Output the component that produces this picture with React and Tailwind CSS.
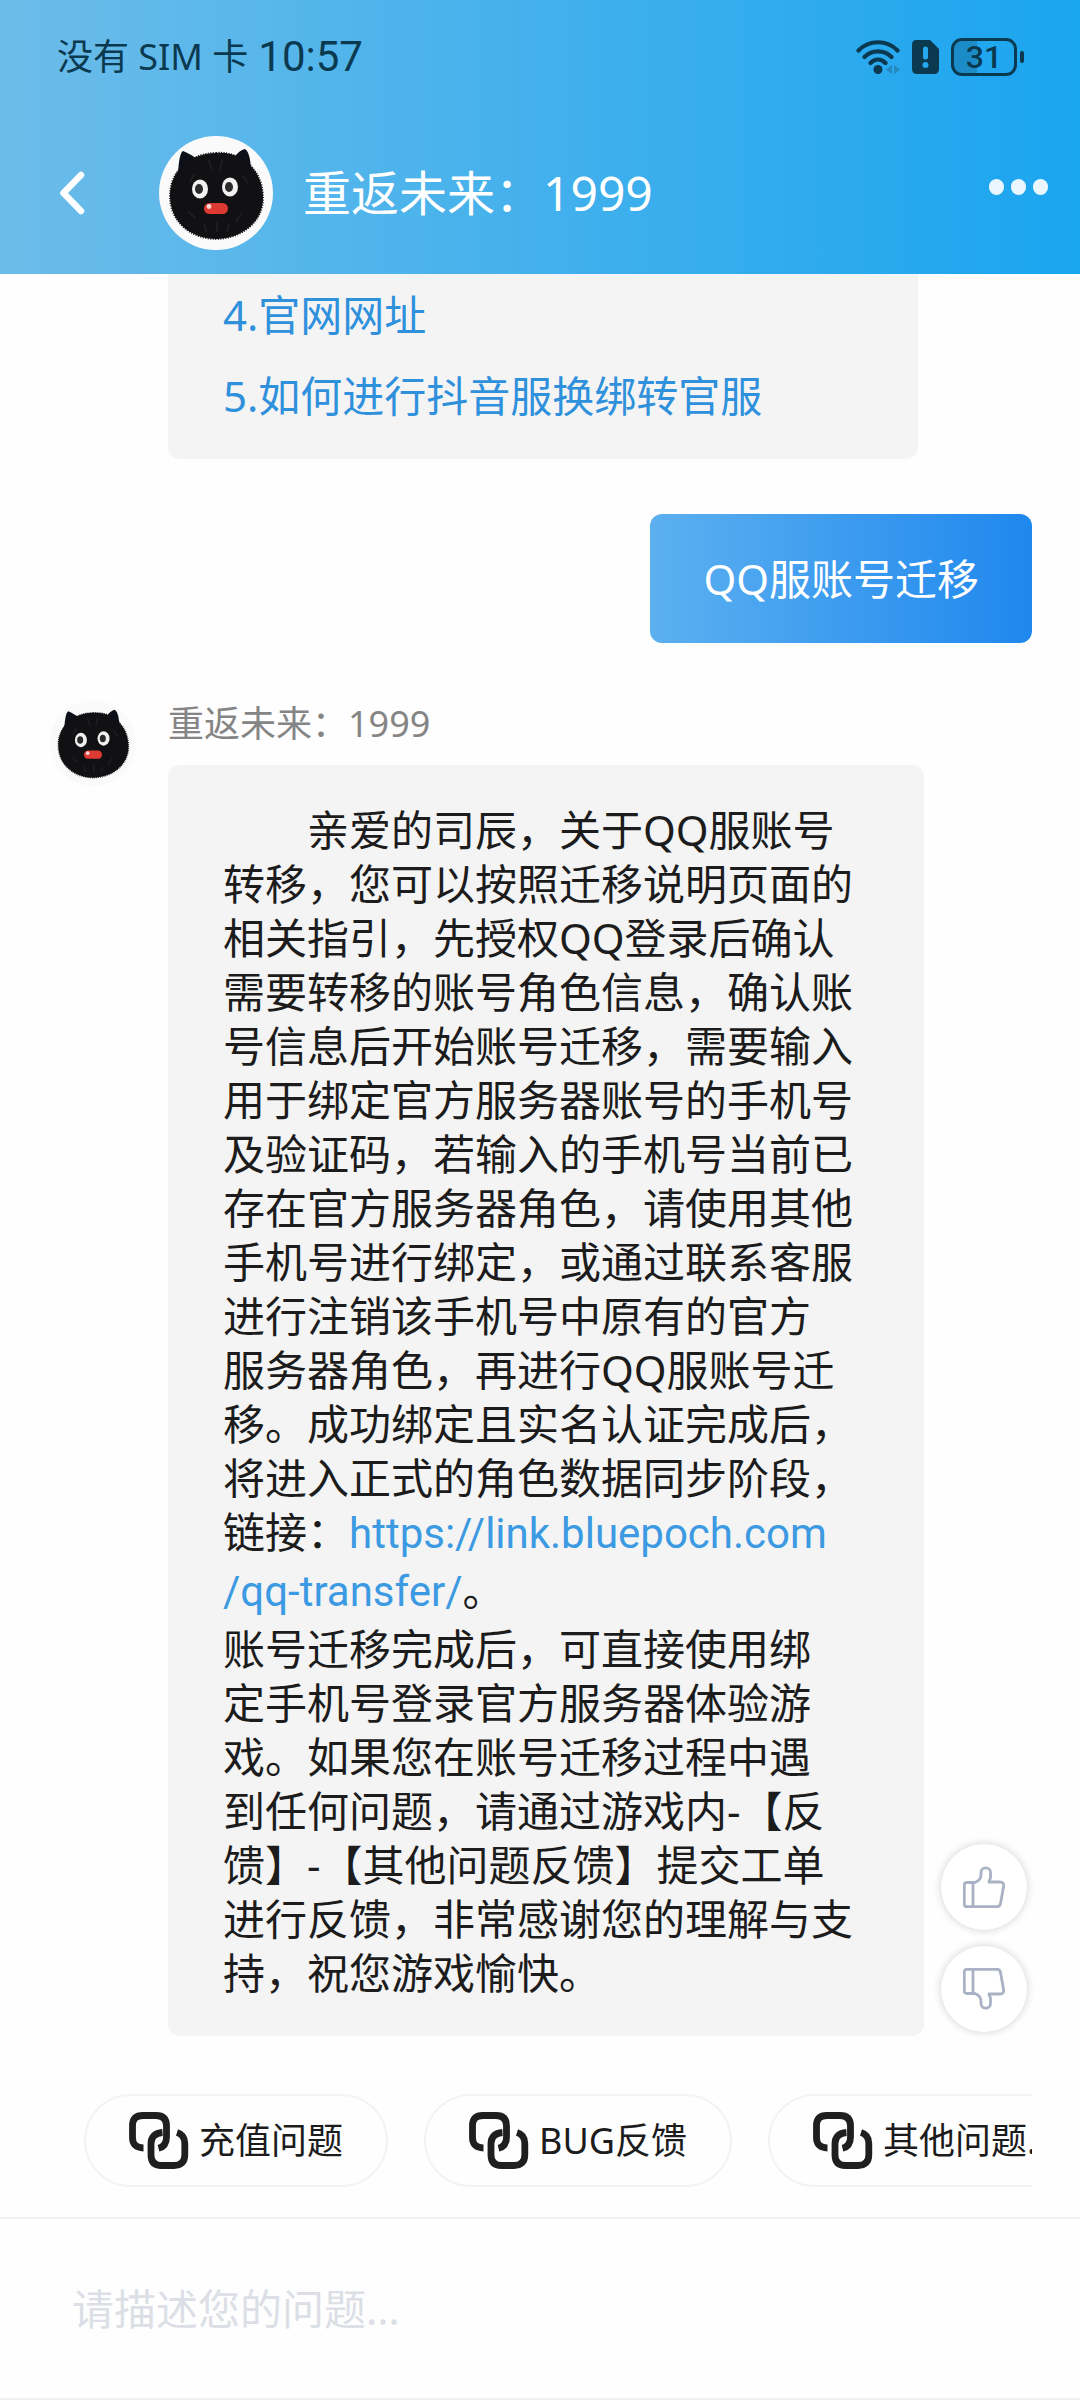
// 客服聊天页面
import { useState } from 'react';

const faqs = ['4.官网网址', '5.如何进行抖音服换绑转官服'];
const shortcuts = ['充值问题', 'BUG反馈', '其他问题...'];

const replyIntro = `\u3000\u3000亲爱的司辰，关于QQ服账号
转移，您可以按照迁移说明页面的
相关指引，先授权QQ登录后确认
需要转移的账号角色信息，确认账
号信息后开始账号迁移，需要输入
用于绑定官方服务器账号的手机号
及验证码，若输入的手机号当前已
存在官方服务器角色，请使用其他
手机号进行绑定，或通过联系客服
进行注销该手机号中原有的官方
服务器角色，再进行QQ服账号迁
移。成功绑定且实名认证完成后，
将进入正式的角色数据同步阶段，`;

const replyOutro = `账号迁移完成后，可直接使用绑
定手机号登录官方服务器体验游
戏。如果您在账号迁移过程中遇
到任何问题，请通过游戏内-【反
馈】-【其他问题反馈】提交工单
进行反馈，非常感谢您的理解与支
持，祝您游戏愉快。`;

const linkUrl = 'https://link.bluepoch.com/qq-transfer/';

function Avatar({ className }) {
  return (
    <svg viewBox="0 0 114 114" className={className} aria-hidden="true">
      <circle cx="57" cy="57" r="57" fill="#fafafa" />
      <path d="M19 38 Q20 17 24 15 Q30 17 41 25 Z M92 38 Q92 17 86 13 Q80 14 74 23 Z" fill="#0d1019" />
      <path d="M57 17 C82 15 103 33 104 60 C105 85 84 102 58 103 C32 103 11 86 11 60 C11 33 33 17 57 17 Z" fill="#111114" />
      <path d="M57 17 C82 15 103 33 104 60 C105 85 84 102 58 103 C32 103 11 86 11 60 C11 33 33 17 57 17 Z" fill="none" stroke="#111114" strokeWidth="2" strokeDasharray="1 1.500" />
      <path d="M50 25l3 9M63 24l-2 10M35 38l-4 8M84 40l5 7M30 76l6 6M82 78l-5 8M58 86v9M45 88l2 7M70 89l-2 6" stroke="#1d1d22" strokeWidth="2" strokeLinecap="round" />
      <ellipse cx="41" cy="53" rx="8" ry="9.500" fill="#f1f1f1" />
      <ellipse cx="71" cy="51" rx="8" ry="9.500" fill="#f1f1f1" />
      <ellipse cx="40" cy="53" rx="4" ry="5" fill="#2b2b2b" />
      <ellipse cx="70" cy="51" rx="4" ry="5" fill="#2b2b2b" />
      <rect x="45" y="67" width="24" height="11" rx="5.500" fill="#dc3a33" />
      <circle cx="50" cy="70.500" r="2.400" fill="#fbd9d6" />
    </svg>
  );
}

function ThumbIcon({ className }) {
  return (
    <svg viewBox="0 0 42 42" className={className} fill="none" stroke="#a9b2c4" strokeWidth="2.800" strokeLinejoin="round" aria-hidden="true">
      <path d="M10 16.500H12C16 15 18 12 18 8.500V6.500C18 .3 27.500 .3 27.500 6.500V11.500C27.500 13.500 26 14 26 16H37C40 16 41 18 40.600 20.500L37.500 37.500C37 40 36 40.700 34 40.700H4C2 40.700 1.300 40 1.300 38V19C1.300 17 2 16.500 4 16.500Z" />
      <path d="M10 16.500V40.500" />
    </svg>
  );
}

function ChainIcon() {
  return (
    <svg viewBox="0 0 60 57" className="h-[57px] w-[60px] shrink-0" fill="none" stroke="#1f1f1f" strokeWidth="6.800" aria-hidden="true">
      <path d="M14.500 36C7 36 3.500 32 3.500 25.500V14C3.500 7 7 3.500 14 3.500H27C34 3.500 37.500 7 37.500 14V25C37.500 31 35 35 29.500 36.300" />
      <path d="M33.500 20.500C26 21 22 25 22 31.500V43C22 50 25.500 53.500 32.500 53.500H45C52 53.500 55.800 50 55.800 43V31.500C55.800 25.500 53 22 48 20.500" />
    </svg>
  );
}

function StatusBar() {
  return (
    <div className="flex items-center justify-between pr-14 pl-[57px] text-[#0b3950]">
      <div className="flex items-center gap-[10px]">
        <span className="text-[36px] leading-[50px]">没有 SIM 卡</span>
        <span className="font-[Roboto,sans-serif] text-[42px] leading-[50px]">10:57</span>
      </div>
      <div className="flex items-center gap-3">
        <svg viewBox="0 0 44 34" className="h-[34px] w-11" fill="none" stroke="currentColor" strokeWidth="4.200" strokeLinecap="round" aria-hidden="true">
          <path d="M2.500 10.500C13 -.5 31 -.5 41.500 10.500M8.500 17C16 9.500 28 9.500 35.500 17M14.500 23C19 18.500 25 18.500 29.500 23" />
          <circle cx="22" cy="29.500" r="4.500" fill="currentColor" stroke="none" />
          <path d="M36 25v9l-6-4.500ZM38 25v9l6-4.500Z" fill="#2587bd" stroke="none" />
        </svg>
        <svg viewBox="0 0 27 34" className="h-[34px] w-[27px]" aria-hidden="true">
          <path d="M4 0H18L27 9V29Q27 34 22 34H5Q0 34 0 29V5Q0 0 4 0Z" fill="currentColor" />
          <path d="M13.500 9V17" stroke="#27a8ee" strokeWidth="5" strokeLinecap="round" />
          <circle cx="13.500" cy="25" r="3" fill="#27a8ee" />
        </svg>
        <div className="flex items-center gap-[3px]">
          <div className="flex h-[38px] w-[66px] items-center justify-center rounded-[11px] border-3 border-current bg-linear-to-r from-[#1c8cc8] from-38% to-transparent to-38% font-[Roboto,sans-serif] text-[32px] leading-8 font-medium">31</div>
          <div className="h-3 w-1 rounded-full bg-current" />
        </div>
      </div>
    </div>
  );
}

export default function App() {
  const [text, setText] = useState('');
  const [vote, setVote] = useState(null);

  return (
    <div lang="zh-CN" className="flex min-h-screen flex-col bg-[#fefefe] font-['Noto_Sans','Noto_Sans_CJK_SC',sans-serif] text-[42px] leading-[54px] text-[#1c1c1c]">
      <header className="flex h-[274px] flex-col bg-linear-to-r/srgb from-[#6cbce9] to-[#1aa5ef] pt-8 text-white">
        <StatusBar />
        <div className="mt-[54px] flex items-center pr-8 pl-[59px]">
          <button aria-label="返回">
            <svg viewBox="0 0 26 44" className="h-11 w-[26px]" fill="none" stroke="currentColor" strokeWidth="6.500" strokeLinecap="round" strokeLinejoin="round" aria-hidden="true">
              <path d="M22 4 4.500 22 22 40" />
            </svg>
          </button>
          <Avatar className="ml-[74px] h-[114px] w-[114px]" />
          <h1 className="ml-[30px] flex-1 text-[48px]">重返未来：1999</h1>
          <button aria-label="更多" className="flex gap-[7px] pb-3">
            <span className="h-4 w-[15px] rounded-full bg-[#e9f6fe]" />
            <span className="h-4 w-[15px] rounded-full bg-[#e9f6fe]" />
            <span className="h-4 w-[15px] rounded-full bg-[#e9f6fe]" />
          </button>
        </div>
      </header>

      <main className="flex-1">
        <ul className="mr-[162px] ml-[168px] rounded-b-xl bg-[#f4f4f4] px-[55px] pb-[23px]">
          {faqs.map(q => (
            <li key={q} className="leading-[81px]"><a href="#faq" className="text-[#2f90dc]">{q}</a></li>
          ))}
        </ul>

        <div className="mt-[55px] mr-12 flex justify-end">
          <p className="rounded-xl bg-linear-to-r/srgb from-[#5cb0f0] to-[#1f88ee] px-[53px] pt-[38px] pb-[37px] text-white">QQ服账号迁移</p>
        </div>

        <div className="mt-[57px] flex items-start pr-[53px] pl-[50px]">
          <Avatar className="h-[86px] w-[86px] shrink-0" />
          <div className="ml-8 flex-1">
            <div className="mb-[17px] text-[36px] leading-[48px] text-[#858585]">重返未来：1999</div>
            <div className="flex items-end gap-[17px]">
              <div className="flex-1 rounded-xl bg-[#f4f4f4] pt-[38px] pb-9 pl-[55px] whitespace-nowrap">
                <p className="whitespace-pre">{replyIntro}</p>
                <div className="font-['Roboto','Noto_Sans_CJK_SC',sans-serif]">
                  <p className="leading-[57px]">
                    链接：<a href={linkUrl} className="text-[#3c9ae2]">https://link.bluepoch.com</a>
                  </p>
                  <p className="leading-[60px]">
                    <a href={linkUrl} className="text-[#3c9ae2]">/qq-transfer/</a>。
                  </p>
                </div>
                <p className="whitespace-pre">{replyOutro}</p>
              </div>
              <div className="flex flex-col gap-4 pb-1">
                <button aria-label="有帮助" aria-pressed={vote === 'up'} onClick={() => setVote('up')}
                  className="flex h-[86px] w-[86px] items-center justify-center rounded-full bg-white shadow-[0_0_8px_rgba(0,0,0,0.18)]">
                  <ThumbIcon className="h-[42px] w-[42px]" />
                </button>
                <button aria-label="没帮助" aria-pressed={vote === 'down'} onClick={() => setVote('down')}
                  className="flex h-[86px] w-[86px] items-center justify-center rounded-full bg-white shadow-[0_0_8px_rgba(0,0,0,0.18)]">
                  <ThumbIcon className="h-[42px] w-[42px] -scale-y-100" />
                </button>
              </div>
            </div>
          </div>
        </div>
      </main>

      <nav className="mt-[58px] mr-12 mb-[30px] ml-[84px] flex gap-9 overflow-x-auto [scrollbar-width:none]">
        {shortcuts.map(s => (
          <button key={s} className="flex h-[93px] shrink-0 items-center gap-[10px] rounded-full border-2 border-[#f3f3f3] px-[43px] text-[36px] whitespace-nowrap">
            <ChainIcon />
            {s}
          </button>
        ))}
      </nav>

      <footer className="border-y-2 border-[#f0f0f0]">
        <input value={text} onChange={e => setText(e.target.value)} aria-label="问题描述" placeholder="请描述您的问题..."
          className="block h-[179px] w-full px-[72px] placeholder:text-[#dcdfe6] focus:outline-none" />
      </footer>
    </div>
  );
}
